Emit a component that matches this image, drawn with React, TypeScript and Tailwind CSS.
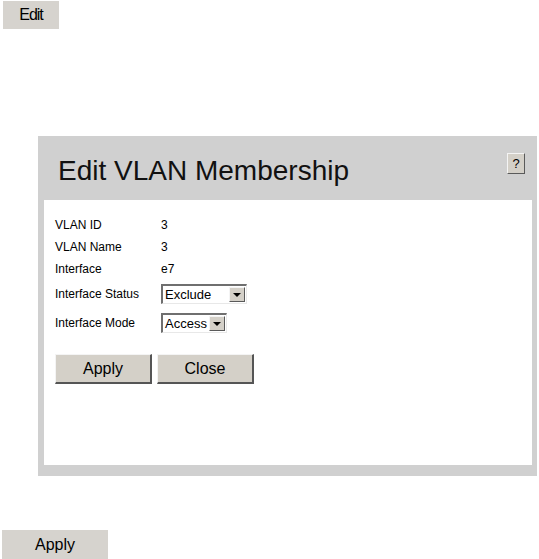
const font = "font-['Liberation_Sans',Arial,sans-serif]";

const SelectBox = ({ value, width }: { value: string; width: string }) => (
  <div
    className={`flex h-[20px] ${width} items-stretch border-t-2 border-l-2 border-b border-r border-t-[#6f6f6f] border-l-[#6f6f6f] border-b-[#e8e8e8] border-r-[#e8e8e8] bg-white`}
  >
    <span className="flex flex-1 items-center pl-[2px] text-[13px] leading-[13px] text-black">{value}</span>
    <span className="m-[1px] flex w-[16px] items-center justify-center border border-t-[#f4f4f4] border-l-[#f4f4f4] border-b-[#5a5a5a] border-r-[#5a5a5a] bg-[#d4d0c8]">
      <svg width="8" height="4" viewBox="0 0 8 4">
        <path d="M0 0h8L4 4z" fill="#000" />
      </svg>
    </span>
  </div>
);

const Row = ({ label, children }: { label: string; children: React.ReactNode }) => (
  <div className="flex h-[18px] items-center">
    <span className="w-[106px] text-[12px] text-black">{label}</span>
    {children}
  </div>
);

const App = () => {
  return (
    <div className={`h-[559px] w-[539px] overflow-hidden bg-white ${font}`}>
      <button className="ml-[3px] mt-[1px] flex h-[28px] w-[56px] items-center justify-center bg-[#d6d3ce] text-[16px] tracking-[-1px] text-black">
        Edit
      </button>

      <div className="ml-[38px] mt-[107px] flex h-[340px] w-[499px] flex-col bg-[#d0d0d0] pb-[11px] pl-[6px] pr-[5px]">
        <div className="flex h-[64px] items-start justify-between">
          <h1 className="ml-[14px] mt-[19px] text-[28px] leading-[32px] text-[#111]">Edit VLAN Membership</h1>
          <button className="mr-[7px] mt-[17px] flex h-[21px] w-[18px] items-center justify-center border border-t-[#f4f4f4] border-l-[#f4f4f4] border-b-[#5a5a5a] border-r-[#5a5a5a] bg-[#d4d0c8] text-[13px] text-black">
            ?
          </button>
        </div>

        <div className="flex flex-1 flex-col bg-white pl-[11px] pt-[16px]">
          <div className="flex flex-col gap-[4px]">
            <Row label="VLAN ID">
              <span className="text-[12px] text-black">3</span>
            </Row>
            <Row label="VLAN Name">
              <span className="text-[12px] text-black">3</span>
            </Row>
            <Row label="Interface">
              <span className="text-[12px] text-black">e7</span>
            </Row>
          </div>
          <div className="mt-[6px] flex flex-col gap-[9px]">
            <div className="flex h-[20px] items-center">
              <span className="w-[106px] text-[12px] text-black">Interface Status</span>
              <SelectBox value="Exclude" width="w-[86px]" />
            </div>
            <div className="flex h-[20px] items-center">
              <span className="w-[106px] text-[12px] text-black">Interface Mode</span>
              <SelectBox value="Access" width="w-[66px]" />
            </div>
          </div>

          <div className="mt-[21px] flex gap-[5px]">
            <button className="flex h-[30px] w-[97px] items-center justify-center border border-t-[#f4f4f4] border-l-[#f4f4f4] border-b-2 border-r-2 border-b-[#555] border-r-[#555] bg-[#d4d0c8] text-[16px] text-black">
              Apply
            </button>
            <button className="flex h-[30px] w-[97px] items-center justify-center border border-t-[#f4f4f4] border-l-[#f4f4f4] border-b-2 border-r-2 border-b-[#555] border-r-[#555] bg-[#d4d0c8] text-[16px] text-black">
              Close
            </button>
          </div>
        </div>
      </div>

      <button className="ml-[2px] mt-[54px] flex h-[29px] w-[106px] items-center justify-center bg-[#d6d3ce] text-[16px] text-black">
        Apply
      </button>
    </div>
  );
};

export default App;
